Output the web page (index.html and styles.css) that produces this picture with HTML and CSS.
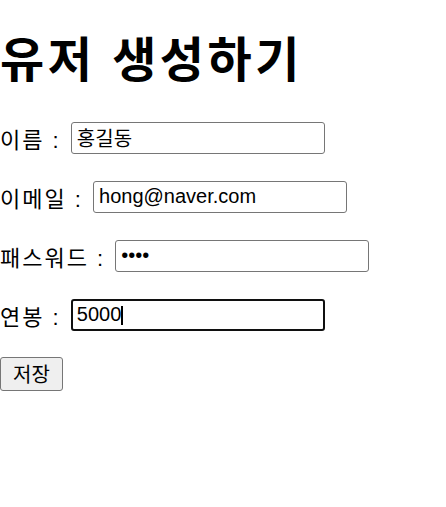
FILE: index.html
```html
<!DOCTYPE html>
<html lang="ko">
<head>
    <meta charset="UTF-8">
    <meta name="viewport" content="width=device-width, initial-scale=1.0">
    <title>유저 생성하기</title>
    <link rel="stylesheet" href="styles.css">
</head>
<body>
    <h1 class="title">유저 생성하기</h1>
    <form class="user-form">
        <p class="row">이름 : <input class="field" type="text" value="홍길동"></p>
        <p class="row">이메일 : <input class="field" type="text" value="hong@naver.com"></p>
        <p class="row">패스워드 : <input class="field" type="password" value="1234"></p>
        <p class="row">연봉 : <span class="caret-wrap"><input class="field focused" type="text" value="5000"><span class="caret"></span></span></p>
        <button class="save" type="button">저장</button>
    </form>
</body>
</html>
```

FILE: styles.css
```css
body {
    margin: 0;
    font-family: "Liberation Sans", "Noto Sans CJK KR", sans-serif;
    font-size: 24px;
    color: #000;
    background: #fff;
}

.title {
    font-size: 48px;
    letter-spacing: 3.5px;
    margin: 32px 0 32px;
    line-height: 1.2;
}

.row {
    font-size: 22px;
    letter-spacing: 2px;
    margin: 0 0 27px;
    height: 32px;
    display: flex;
    align-items: center;
    white-space: pre;
}

.field {
    box-sizing: border-box;
    width: 254px;
    height: 32px;
    padding: 3px 5px;
    font-family: "Liberation Sans", "Noto Sans CJK KR", sans-serif;
    font-size: 20px;
    letter-spacing: 0;
    color: #000;
    border: 1px solid #767676;
    border-radius: 3px;
    margin-left: 2px;
}

.field.focused {
    border: 2px solid #101010;
    outline: none;
    padding: 3px 4px;
}

.caret-wrap {
    position: relative;
    display: inline-block;
}

.caret {
    position: absolute;
    left: 52px;
    top: 7px;
    width: 2px;
    height: 19px;
    background: #000;
}

.save {
    font-family: "Liberation Sans", "Noto Sans CJK KR", sans-serif;
    font-size: 20px;
    height: 34px;
    padding: 0 12px;
    margin-top: -1px;
    background: #efefef;
    border: 1px solid #767676;
    border-radius: 3px;
    color: #000;
}
```
